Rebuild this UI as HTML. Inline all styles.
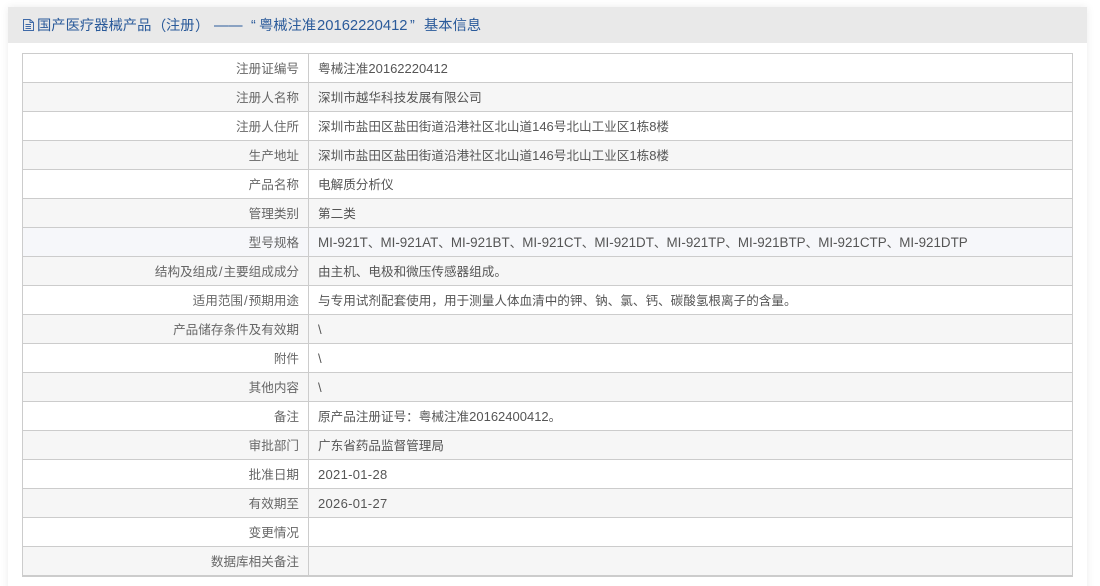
<!DOCTYPE html>
<html lang="zh-CN">
<head>
<meta charset="utf-8">
<title>基本信息</title>
<style>
html,body{margin:0;padding:0;width:1100px;height:586px;overflow:hidden;background:#fff;}
body{font-family:"Liberation Sans","Noto Sans CJK SC",sans-serif;font-size:12.6px;color:#555;position:relative;}
.panel{position:absolute;left:8px;top:7px;width:1079px;height:590px;background:#fff;box-shadow:0 0 8px rgba(0,0,0,.08);}
.head{position:absolute;left:8px;top:7px;width:1079px;height:36px;background:#e9e9e9;}
.h{position:absolute;top:7px;height:36px;line-height:38px;color:#2a5a9a;font-size:14.3px;white-space:nowrap;}
.ico{position:absolute;left:22px;top:18px;}
table{position:absolute;left:22px;top:53px;width:1051px;border-collapse:collapse;table-layout:fixed;border:1px solid #ccc;border-bottom:2px solid #ccc;}
td{height:26px;padding:2px 0 0;border:1px solid #ccc;line-height:26px;white-space:nowrap;box-sizing:content-box;}
td.l{text-align:right;padding-right:9px;color:#666;}
td.v{padding-left:9px;color:#555;}
tr:nth-child(even) td{background:#f6f6f6;}
tr.m td{background:#f6f7fa;}
b{font-weight:normal;font-size:13px;line-height:1;}
b.d{letter-spacing:.3px;}
b.m{font-size:13.4px;}
b.s{margin:0 1px;}
i{font-style:normal;font-family:"Noto Sans CJK TC",sans-serif;line-height:1;}
.w{display:block;height:26px;overflow:hidden;}
</style>
</head>
<body>
<div class="panel"></div>
<div class="head"></div>
<svg class="ico" width="13" height="14" viewBox="0 0 13 14" fill="none" stroke="#3f6aa8" stroke-width="1"><path d="M1.5 1.5H8L11.5 4.5V12.5H1.5Z M8 1.5V4.5H11.5 M3.5 6.5H9 M3.5 8.5H9 M3.5 10.5H9"/></svg>
<div class="h" style="left:37px">国产医疗器械产品</div>
<div class="h" style="left:152px;font-family:'Noto Sans CJK TC',sans-serif;line-height:38px">（</div>
<div class="h" style="left:166px">注册</div>
<div class="h" style="left:195px;font-family:'Noto Sans CJK TC',sans-serif;line-height:38px">）</div>
<div class="h" style="left:214px">——</div>
<div class="h" style="left:251px">“</div>
<div class="h" style="left:259px">粤械注准</div>
<div class="h" style="left:317px;font-size:14.8px">20162220412</div>
<div class="h" style="left:410px">”</div>
<div class="h" style="left:424px">基本信息</div>
<table>
<colgroup><col style="width:286px"><col></colgroup>
<tr><td class="l"><span class="w">注册证编号</span></td><td class="v"><span class="w">粤械注准<b>20162220412</b></span></td></tr>
<tr><td class="l"><span class="w">注册人名称</span></td><td class="v"><span class="w">深圳市越华科技发展有限公司</span></td></tr>
<tr><td class="l"><span class="w">注册人住所</span></td><td class="v"><span class="w">深圳市盐田区盐田街道沿港社区北山道<b>146</b>号北山工业区<b>1</b>栋<b>8</b>楼</span></td></tr>
<tr><td class="l"><span class="w">生产地址</span></td><td class="v"><span class="w">深圳市盐田区盐田街道沿港社区北山道<b>146</b>号北山工业区<b>1</b>栋<b>8</b>楼</span></td></tr>
<tr><td class="l"><span class="w">产品名称</span></td><td class="v"><span class="w">电解质分析仪</span></td></tr>
<tr><td class="l"><span class="w">管理类别</span></td><td class="v"><span class="w">第二类</span></td></tr>
<tr class="m"><td class="l"><span class="w">型号规格</span></td><td class="v"><span class="w"><b class="m">MI-921T</b>、<b class="m">MI-921AT</b>、<b class="m">MI-921BT</b>、<b class="m">MI-921CT</b>、<b class="m">MI-921DT</b>、<b class="m">MI-921TP</b>、<b class="m">MI-921BTP</b>、<b class="m">MI-921CTP</b>、<b class="m">MI-921DTP</b></span></td></tr>
<tr><td class="l"><span class="w">结构及组成<b class="s">/</b>主要组成成分</span></td><td class="v"><span class="w">由主机、电极和微压传感器组成。</span></td></tr>
<tr><td class="l"><span class="w">适用范围<b class="s">/</b>预期用途</span></td><td class="v"><span class="w">与专用试剂配套使用<i>，</i>用于测量人体血清中的钾、钠、氯、钙、碳酸氢根离子的含量。</span></td></tr>
<tr><td class="l"><span class="w">产品储存条件及有效期</span></td><td class="v"><span class="w"><b>\</b></span></td></tr>
<tr><td class="l"><span class="w">附件</span></td><td class="v"><span class="w"><b>\</b></span></td></tr>
<tr><td class="l"><span class="w">其他内容</span></td><td class="v"><span class="w"><b>\</b></span></td></tr>
<tr><td class="l"><span class="w">备注</span></td><td class="v"><span class="w">原产品注册证号<i>：</i>粤械注准<b>20162400412</b>。</span></td></tr>
<tr><td class="l"><span class="w">审批部门</span></td><td class="v"><span class="w">广东省药品监督管理局</span></td></tr>
<tr><td class="l"><span class="w">批准日期</span></td><td class="v"><span class="w"><b class="d">2021-01-28</b></span></td></tr>
<tr><td class="l"><span class="w">有效期至</span></td><td class="v"><span class="w"><b class="d">2026-01-27</b></span></td></tr>
<tr><td class="l"><span class="w">变更情况</span></td><td class="v"><span class="w"></span></td></tr>
<tr><td class="l"><span class="w">数据库相关备注</span></td><td class="v"><span class="w"></span></td></tr>
</table>
</body>
</html>
